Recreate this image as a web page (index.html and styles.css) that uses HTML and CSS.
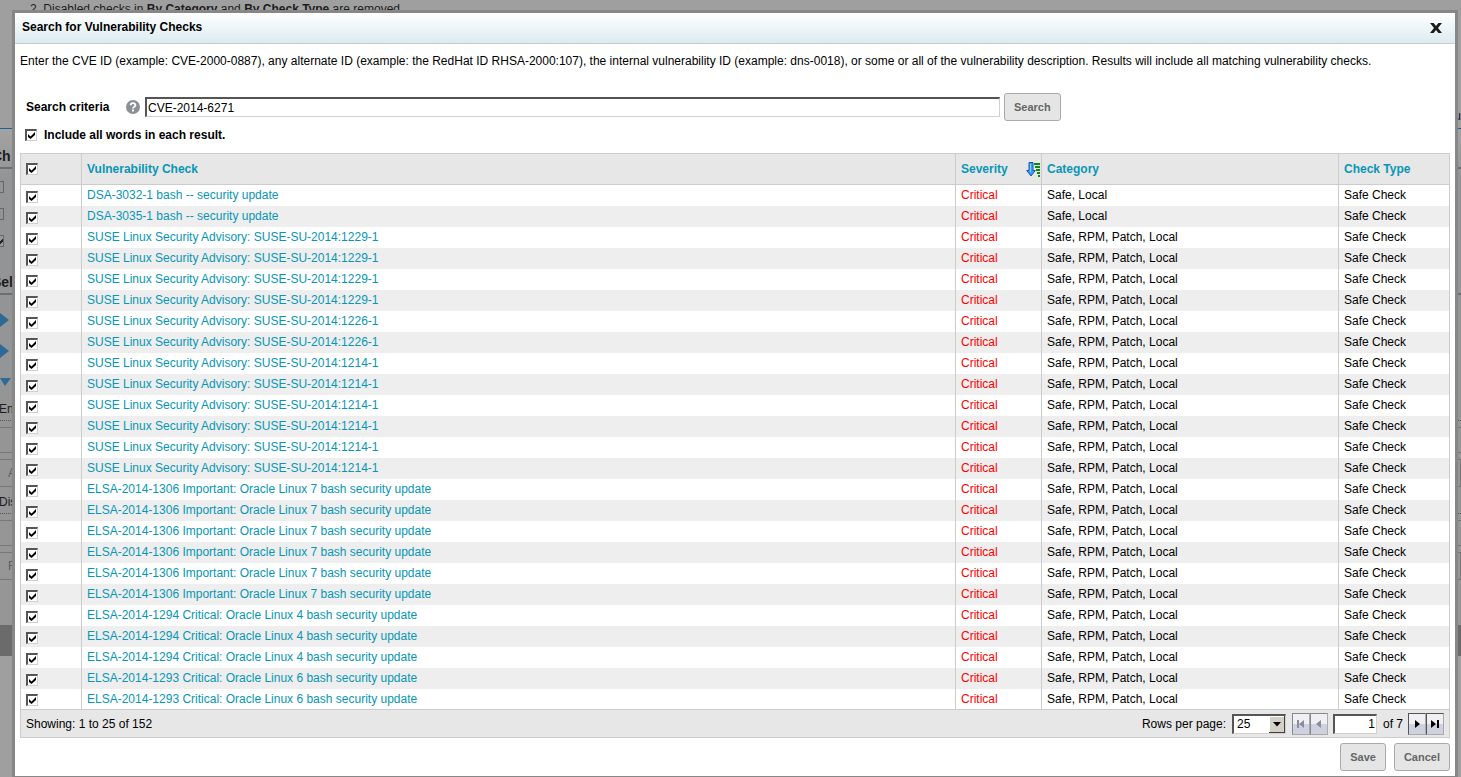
FILE: index.html
```html
<!DOCTYPE html>
<html lang="en">
<head>
<meta charset="utf-8">
<title>Search for Vulnerability Checks</title>
<link rel="stylesheet" href="styles.css">
</head>
<body>
<div class="page" aria-hidden="true">
  <p class="page-note">2. Disabled checks in <b>By Category</b> and <b>By Check Type</b> are removed.</p>
  <div class="page-tabs"><span>u</span></div>
  <div class="page-panel">
    <h2 class="page-title">Ch</h2>
    <div class="page-option"></div>
    <div class="page-option"></div>
    <div class="page-option page-option-on"></div>
    <h2 class="page-title page-title-select">Sel</h2>
    <div class="page-group"><svg width="9" height="14" viewBox="0 0 9 14"><path d="M0 0L9 7L0 14Z" fill="#2d6a98"/></svg></div>
    <div class="page-group"><svg width="9" height="14" viewBox="0 0 9 14"><path d="M0 0L9 7L0 14Z" fill="#2d6a98"/></svg></div>
    <div class="page-group"><svg width="11" height="8" viewBox="0 0 11 8"><path d="M0 0H11L5 8Z" fill="#2d6a98"/></svg></div>
    <div class="page-label">En</div>
    <div class="page-box"></div>
    <div class="page-button">A</div>
    <div class="page-label">Dis</div>
    <div class="page-box"></div>
    <div class="page-button">R</div>
  </div>
  <div class="page-footer"></div>
</div>

<main class="dialog" role="dialog" aria-labelledby="dialog-title">
  <header class="dialog-header">
    <h1 id="dialog-title">Search for Vulnerability Checks</h1>
    <button class="close" type="button" aria-label="Close"><svg width="12" height="10" viewBox="0 0 12 10"><path d="M0 0H3.600L6 3L8.400 0H12L8 5L12 10H8.400L6 7L3.600 10H0L4 5Z" fill="#1c1c1c"/></svg></button>
  </header>
  <div class="dialog-body">
    <p class="intro">Enter the CVE ID (example: CVE-2000-0887), any alternate ID (example: the RedHat ID RHSA-2000:107), the internal vulnerability ID (example: dns-0018), or some or all of the vulnerability description. Results will include all matching vulnerability checks.</p>
    <form class="search">
      <label for="criteria">Search criteria</label>
      <svg class="help" width="14" height="14" viewBox="0 0 14 14"><circle cx="7" cy="7" r="7" fill="#8b9094"/><path d="M4.6 5.3C4.6 2.4 9.4 2.5 9.4 5.2C9.4 6.8 7 6.8 7 8.6" fill="none" stroke="#fff" stroke-width="1.8"/><path d="M6 9.6H8V11.4H6Z" fill="#fff"/></svg>
      <input class="field criteria" id="criteria" type="text" value="CVE-2014-6271">
      <button class="btn" type="button">Search</button>
    </form>
    <div class="all-words"><input class="check" id="all-words" type="checkbox" checked><label for="all-words">Include all words in each result.</label></div>

    <table class="results">
      <colgroup><col class="col-check"><col><col class="col-severity"><col class="col-category"><col class="col-type"></colgroup>
      <thead>
        <tr><th><input class="check" type="checkbox" aria-label="Select all" checked></th><th><a href="#">Vulnerability Check</a></th><th><div class="sorted"><a href="#">Severity</a><svg width="15" height="15" viewBox="0 0 15 15"><path d="M3 .5H7V8.5H9.3L5 14L.7 8.5H3Z" fill="#3d9bf0" stroke="#1557b8"/><path d="M4.5 2V10" stroke="#8fcbff"/><path d="M8 1H14V3H8ZM9 4H14V6H9ZM10 7H14V9H10ZM11 10H14V12H11ZM12 13H14V15H12Z" fill="#0b8a10"/></svg></div></th><th><a href="#">Category</a></th><th><a href="#">Check Type</a></th></tr>
      </thead>
      <tbody>
        <tr><td><input class="check" type="checkbox" aria-label="Select row 1" checked></td><td><a href="#">DSA-3032-1 bash -- security update</a></td><td class="critical">Critical</td><td>Safe, Local</td><td>Safe Check</td></tr>
        <tr><td><input class="check" type="checkbox" aria-label="Select row 2" checked></td><td><a href="#">DSA-3035-1 bash -- security update</a></td><td class="critical">Critical</td><td>Safe, Local</td><td>Safe Check</td></tr>
        <tr><td><input class="check" type="checkbox" aria-label="Select row 3" checked></td><td><a href="#">SUSE Linux Security Advisory: SUSE-SU-2014:1229-1</a></td><td class="critical">Critical</td><td>Safe, RPM, Patch, Local</td><td>Safe Check</td></tr>
        <tr><td><input class="check" type="checkbox" aria-label="Select row 4" checked></td><td><a href="#">SUSE Linux Security Advisory: SUSE-SU-2014:1229-1</a></td><td class="critical">Critical</td><td>Safe, RPM, Patch, Local</td><td>Safe Check</td></tr>
        <tr><td><input class="check" type="checkbox" aria-label="Select row 5" checked></td><td><a href="#">SUSE Linux Security Advisory: SUSE-SU-2014:1229-1</a></td><td class="critical">Critical</td><td>Safe, RPM, Patch, Local</td><td>Safe Check</td></tr>
        <tr><td><input class="check" type="checkbox" aria-label="Select row 6" checked></td><td><a href="#">SUSE Linux Security Advisory: SUSE-SU-2014:1229-1</a></td><td class="critical">Critical</td><td>Safe, RPM, Patch, Local</td><td>Safe Check</td></tr>
        <tr><td><input class="check" type="checkbox" aria-label="Select row 7" checked></td><td><a href="#">SUSE Linux Security Advisory: SUSE-SU-2014:1226-1</a></td><td class="critical">Critical</td><td>Safe, RPM, Patch, Local</td><td>Safe Check</td></tr>
        <tr><td><input class="check" type="checkbox" aria-label="Select row 8" checked></td><td><a href="#">SUSE Linux Security Advisory: SUSE-SU-2014:1226-1</a></td><td class="critical">Critical</td><td>Safe, RPM, Patch, Local</td><td>Safe Check</td></tr>
        <tr><td><input class="check" type="checkbox" aria-label="Select row 9" checked></td><td><a href="#">SUSE Linux Security Advisory: SUSE-SU-2014:1214-1</a></td><td class="critical">Critical</td><td>Safe, RPM, Patch, Local</td><td>Safe Check</td></tr>
        <tr><td><input class="check" type="checkbox" aria-label="Select row 10" checked></td><td><a href="#">SUSE Linux Security Advisory: SUSE-SU-2014:1214-1</a></td><td class="critical">Critical</td><td>Safe, RPM, Patch, Local</td><td>Safe Check</td></tr>
        <tr><td><input class="check" type="checkbox" aria-label="Select row 11" checked></td><td><a href="#">SUSE Linux Security Advisory: SUSE-SU-2014:1214-1</a></td><td class="critical">Critical</td><td>Safe, RPM, Patch, Local</td><td>Safe Check</td></tr>
        <tr><td><input class="check" type="checkbox" aria-label="Select row 12" checked></td><td><a href="#">SUSE Linux Security Advisory: SUSE-SU-2014:1214-1</a></td><td class="critical">Critical</td><td>Safe, RPM, Patch, Local</td><td>Safe Check</td></tr>
        <tr><td><input class="check" type="checkbox" aria-label="Select row 13" checked></td><td><a href="#">SUSE Linux Security Advisory: SUSE-SU-2014:1214-1</a></td><td class="critical">Critical</td><td>Safe, RPM, Patch, Local</td><td>Safe Check</td></tr>
        <tr><td><input class="check" type="checkbox" aria-label="Select row 14" checked></td><td><a href="#">SUSE Linux Security Advisory: SUSE-SU-2014:1214-1</a></td><td class="critical">Critical</td><td>Safe, RPM, Patch, Local</td><td>Safe Check</td></tr>
        <tr><td><input class="check" type="checkbox" aria-label="Select row 15" checked></td><td><a href="#">ELSA-2014-1306 Important: Oracle Linux 7 bash security update</a></td><td class="critical">Critical</td><td>Safe, RPM, Patch, Local</td><td>Safe Check</td></tr>
        <tr><td><input class="check" type="checkbox" aria-label="Select row 16" checked></td><td><a href="#">ELSA-2014-1306 Important: Oracle Linux 7 bash security update</a></td><td class="critical">Critical</td><td>Safe, RPM, Patch, Local</td><td>Safe Check</td></tr>
        <tr><td><input class="check" type="checkbox" aria-label="Select row 17" checked></td><td><a href="#">ELSA-2014-1306 Important: Oracle Linux 7 bash security update</a></td><td class="critical">Critical</td><td>Safe, RPM, Patch, Local</td><td>Safe Check</td></tr>
        <tr><td><input class="check" type="checkbox" aria-label="Select row 18" checked></td><td><a href="#">ELSA-2014-1306 Important: Oracle Linux 7 bash security update</a></td><td class="critical">Critical</td><td>Safe, RPM, Patch, Local</td><td>Safe Check</td></tr>
        <tr><td><input class="check" type="checkbox" aria-label="Select row 19" checked></td><td><a href="#">ELSA-2014-1306 Important: Oracle Linux 7 bash security update</a></td><td class="critical">Critical</td><td>Safe, RPM, Patch, Local</td><td>Safe Check</td></tr>
        <tr><td><input class="check" type="checkbox" aria-label="Select row 20" checked></td><td><a href="#">ELSA-2014-1306 Important: Oracle Linux 7 bash security update</a></td><td class="critical">Critical</td><td>Safe, RPM, Patch, Local</td><td>Safe Check</td></tr>
        <tr><td><input class="check" type="checkbox" aria-label="Select row 21" checked></td><td><a href="#">ELSA-2014-1294 Critical: Oracle Linux 4 bash security update</a></td><td class="critical">Critical</td><td>Safe, RPM, Patch, Local</td><td>Safe Check</td></tr>
        <tr><td><input class="check" type="checkbox" aria-label="Select row 22" checked></td><td><a href="#">ELSA-2014-1294 Critical: Oracle Linux 4 bash security update</a></td><td class="critical">Critical</td><td>Safe, RPM, Patch, Local</td><td>Safe Check</td></tr>
        <tr><td><input class="check" type="checkbox" aria-label="Select row 23" checked></td><td><a href="#">ELSA-2014-1294 Critical: Oracle Linux 4 bash security update</a></td><td class="critical">Critical</td><td>Safe, RPM, Patch, Local</td><td>Safe Check</td></tr>
        <tr><td><input class="check" type="checkbox" aria-label="Select row 24" checked></td><td><a href="#">ELSA-2014-1293 Critical: Oracle Linux 6 bash security update</a></td><td class="critical">Critical</td><td>Safe, RPM, Patch, Local</td><td>Safe Check</td></tr>
        <tr><td><input class="check" type="checkbox" aria-label="Select row 25" checked></td><td><a href="#">ELSA-2014-1293 Critical: Oracle Linux 6 bash security update</a></td><td class="critical">Critical</td><td>Safe, RPM, Patch, Local</td><td>Safe Check</td></tr>
      </tbody>
    </table>
    <div class="pager">
      <span class="showing">Showing: 1 to 25 of 152</span>
      <label for="rows">Rows per page:</label>
      <select class="field rows" id="rows"><option>25</option><option>50</option><option>100</option></select>
      <div class="nav">
        <button class="step" type="button" aria-label="First page" disabled><svg width="12" height="10" viewBox="0 0 12 10"><path d="M2 1H4V9H2ZM9 1V9L4 5Z" fill="#8b8d98"/></svg></button>
        <button class="step" type="button" aria-label="Previous page" disabled><svg width="12" height="10" viewBox="0 0 12 10"><path d="M8 1V9L3 5Z" fill="#8b8d98"/></svg></button>
      </div>
      <input class="field page-number" type="text" value="1" aria-label="Page">
      <span class="page-count">of 7</span>
      <div class="nav">
        <button class="step" type="button" aria-label="Next page"><svg width="12" height="10" viewBox="0 0 12 10"><path d="M4 1V9L9 5Z" fill="#000"/></svg></button>
        <button class="step" type="button" aria-label="Last page"><svg width="12" height="10" viewBox="0 0 12 10"><path d="M2 1V9L7 5ZM8 1H10V9H8Z" fill="#000"/></svg></button>
      </div>
    </div>
    <div class="actions">
      <button class="btn" type="button">Save</button>
      <button class="btn" type="button">Cancel</button>
    </div>
  </div>
</main>
</body>
</html>
```
FILE: styles.css
```css
* { box-sizing: border-box; }

html, body { height: 100%; }

body {
  margin: 0;
  overflow: hidden;
  position: relative;
  background: #9f9fa0;
  color: #000;
  font: 12px/16px "Liberation Sans", Arial, sans-serif;
}

button, input, select { margin: 0; font: inherit; color: inherit; }
a { color: #0796b6; text-decoration: none; }

/* Dimmed page under the dialog */
.page { color: #1c1c1c; }
.page-note { margin: 0; padding: 1px 0 0 30px; height: 104px; }
.page-tabs { height: 25px; border-bottom: 1px solid #205f92; line-height: 24px; text-align: right; }
.page-panel { height: 496px; padding-top: 16px; background: linear-gradient(#a3a3a4, #939495 50px, #969697); }
.page-title { margin: 0 0 12px; height: 24px; border-bottom: 2px solid #6e6e6e; font-size: 14px; line-height: 22px; text-indent: -8px; }
.page-title-select { margin: 24px 0 9px; }
.page-option { width: 4px; height: 12px; margin-bottom: 15px; border: 1px solid #666; border-left: 0; }
.page-option-on { background: linear-gradient(135deg, #999 40%, #222 40%, #222 65%, #999 65%); }
.page-group { height: 31px; display: flex; align-items: center; }
.page-label { height: 24px; border-bottom: 1px dotted #555; line-height: 24px; text-indent: -1px; }
.page-box { height: 26px; margin: 6px 0; border: 1px solid #777; border-width: 1px 0; }
.page-button { height: 28px; margin-bottom: 3px; padding-left: 8px; border: 1px solid #777; border-left: 0; color: #5d5d5d; line-height: 26px; }
.page-footer { height: 31px; background: #6b6b6b; }

/* Dialog */
.dialog {
  position: absolute;
  top: 10px;
  left: 12px;
  right: 3px;
  border: 3px solid #878787;
  background: #fff;
}
.dialog-header {
  display: flex;
  align-items: center;
  justify-content: space-between;
  height: 31px;
  padding: 0 12px 2px 7px;
  border-bottom: 1px solid #ccc;
  background: linear-gradient(#fff, #dcebf0);
}
.dialog-header h1 { margin: 0; font-size: 12px; }
.close { display: flex; padding: 2px 1px 0; border: 0; background: none; }
.dialog-body { padding: 9px 5px 5px; }
.intro { margin: 0 0 24px; white-space: nowrap; }

.field {
  height: 20px;
  padding: 0 1px;
  border: 2px solid #555;
  border-right: 1px solid #d4d0c8;
  border-bottom: 1px solid #d4d0c8;
  border-radius: 0;
  outline: 0;
  background: #fff;
}
.btn {
  height: 28px;
  padding: 0 9px;
  border: 1px solid #aaa;
  border-radius: 3px;
  background: #e5e5e5;
  color: #666;
  font-size: 11px;
  font-weight: bold;
}
.check {
  appearance: none;
  flex: none;
  display: block;
  width: 12px;
  height: 12px;
  border: 2px solid #555;
  border-right: 1px solid #d4d0c8;
  border-bottom: 1px solid #d4d0c8;
  background: #fff;
}
.check:checked {
  background: #fff url("data:image/svg+xml,%3Csvg xmlns='http://www.w3.org/2000/svg' viewBox='0 0 7 7'%3E%3Cpath d='M0 2L2.500 4.500L7 0V3L2.500 7L0 5Z'/%3E%3C/svg%3E") center / 7px 7px no-repeat;
}

.search { display: flex; align-items: center; padding-left: 6px; }
.search label { width: 100px; font-weight: bold; }
.help { flex: none; margin-right: 5px; }
.criteria { width: calc(100% - 569px); margin-right: 4px; }
.all-words { display: flex; align-items: center; gap: 7px; margin: 6px 0 10px 5px; font-weight: bold; }

.results { width: 100%; table-layout: fixed; border-collapse: collapse; border: 1px solid #ccc; }
.col-check { width: 61px; }
.col-severity { width: 86px; }
.col-category { width: 297px; }
.col-type { width: 111px; }
.results th, .results td { padding: 0 5px; border-left: 1px solid #ccc; text-align: left; white-space: nowrap; }
.results th { height: 31px; border-bottom: 1px solid #ccc; background: #e7e7e7; }
.results td { height: 21px; }
.results td .check { margin-top: 3px; }
.results tbody tr:nth-child(even) { background: #eee; }
.results .critical { color: #f00; }
.sorted { display: flex; justify-content: space-between; align-items: center; margin-right: -5px; }

.pager {
  display: flex;
  align-items: center;
  height: 28px;
  padding: 0 5px;
  border: 1px solid #ccc;
  border-top: 0;
  background: #e7e7e7;
}
.showing { flex: 1; }
.rows {
  appearance: none;
  width: 54px;
  margin: 0 6px;
  padding-left: 3px;
  background: #fff url("data:image/svg+xml,%3Csvg xmlns='http://www.w3.org/2000/svg' width='16' height='17'%3E%3Crect width='16' height='17' fill='%23404040'/%3E%3Crect width='15' height='16' fill='%23fff'/%3E%3Crect x='1' y='1' width='14' height='15' fill='%23d4d0c8'/%3E%3Cpath d='M4 6H12L8 10.500Z'/%3E%3C/svg%3E") right center no-repeat;
}
.nav { display: flex; }
.step {
  display: flex;
  align-items: center;
  justify-content: center;
  width: 18px;
  height: 22px;
  padding: 0;
  border: 1px solid #555;
  border-right-color: #aaa;
  border-bottom-color: #aaa;
  background: linear-gradient(#f0f0f4 50%, #cdd1e0 50%);
}
.step:disabled { border-color: #888 #aaa #aaa #888; }
.page-number { width: 44px; margin: 0 6px 0 5px; text-align: right; }
.page-count { margin-right: 5px; }
.actions { display: flex; justify-content: flex-end; gap: 8px; margin-top: 5px; }
```
